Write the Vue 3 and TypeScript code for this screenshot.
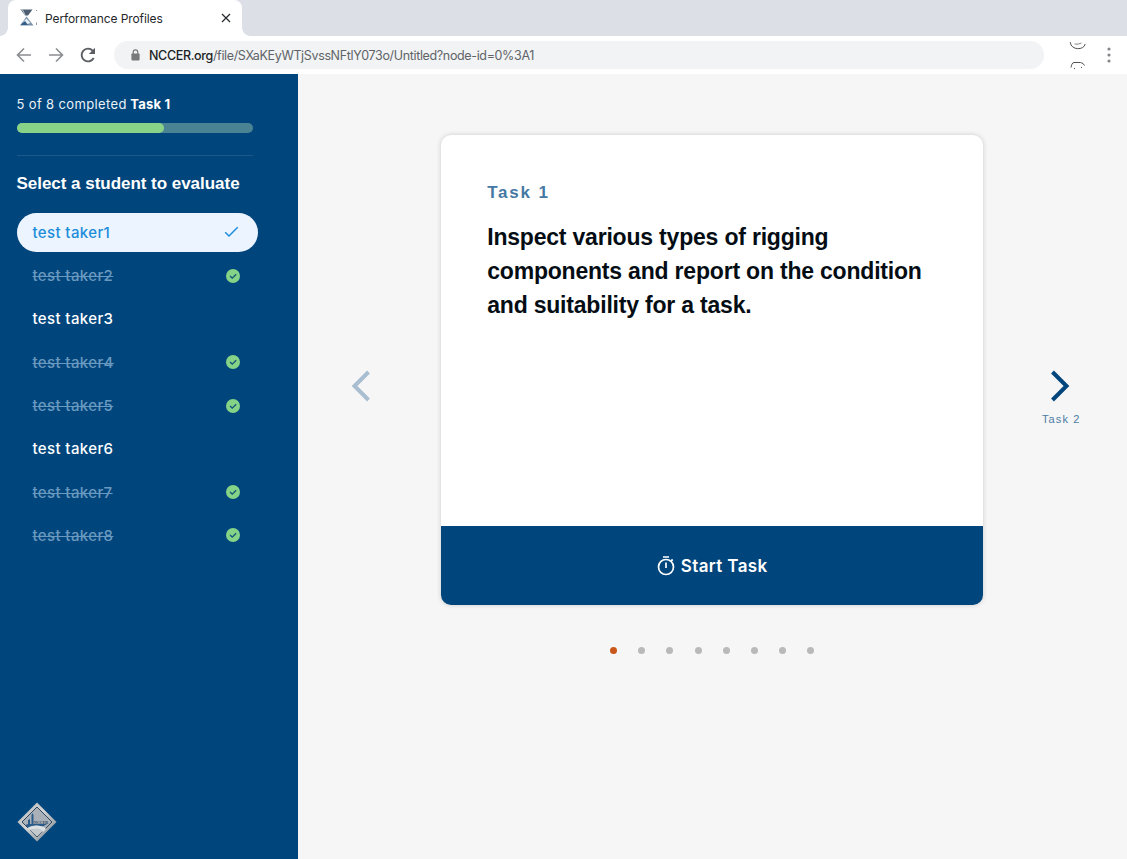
<script setup lang="ts">
interface Student {
  name: string
  status: 'active' | 'done' | 'pending'
}

const students: Student[] = [
  { name: 'test taker1', status: 'active' },
  { name: 'test taker2', status: 'done' },
  { name: 'test taker3', status: 'pending' },
  { name: 'test taker4', status: 'done' },
  { name: 'test taker5', status: 'done' },
  { name: 'test taker6', status: 'pending' },
  { name: 'test taker7', status: 'done' },
  { name: 'test taker8', status: 'done' },
]

const completed = students.filter((s) => s.status === 'done').length
const progress = `${(completed / students.length) * 100}%`
const activeSlide = 1
</script>

<template>
  <div class="window">
    <header class="tabs">
      <div class="tab">
        <svg class="favicon" width="20" height="18" viewBox="0 0 20 18">
          <path d="M0.5 0.5H12.5L8 6.5H5.2Z" fill="#4d5f70" />
          <path d="M0.5 0.5L3 1.5L5.2 6.5" stroke="#b8c9d6" fill="none" />
          <path d="M6.5 7.5L13.5 16.5H0Z" fill="#7790a5" />
          <path d="M6.5 9.5L10.5 14L6 15.5L3 13Z" fill="#e4edf3" />
          <path d="M0.5 16L5 12L8 16Z" fill="#355f8b" />
          <path d="M16.5 13.5V16M16.5 1V2" stroke="#8d98a3" />
        </svg>
        <span class="tab-title">Performance Profiles</span>
        <svg class="close" width="10" height="10" viewBox="0 0 10 10">
          <path d="M1 1L9 9M9 1L1 9" stroke="#25282b" stroke-width="1.2" fill="none" />
        </svg>
      </div>
    </header>

    <div class="toolbar">
      <svg width="16" height="16" viewBox="0 0 16 16">
        <path d="M15 8H2M8 1.5L1.5 8L8 14.5" fill="none" stroke="#8a8d91" stroke-width="1.6" />
      </svg>
      <svg width="16" height="16" viewBox="0 0 16 16">
        <path d="M1 8H14M8 1.5L14.5 8L8 14.5" fill="none" stroke="#8a8d91" stroke-width="1.6" />
      </svg>
      <svg width="16" height="16" viewBox="0 0 16 16">
        <path d="M13.7 11A6.4 6.4 0 1 1 12.7 3.6L14 5" fill="none" stroke="#5b5e62" stroke-width="1.9" />
        <path d="M15 0.8V7H8.8Z" fill="#5b5e62" />
      </svg>
      <div class="address">
        <svg width="9" height="12" viewBox="0 0 9 12">
          <path d="M2.2 5V3.2a2.3 2.3 0 0 1 4.6 0V5" fill="none" stroke="#77797c" stroke-width="1.2" />
          <rect x="0.4" y="4.4" width="8.2" height="7" rx="0.8" fill="#77797c" />
        </svg>
        <span class="url"><span class="host">NCCER.org</span><span class="path">/file/SXaKEyWTjSvssNFtlY073o/Untitled?node-id=0%3A1</span></span>
      </div>
      <svg class="avatar" width="18" height="28" viewBox="0 0 18 28">
        <path d="M1.2 1.2C2 9.5 15 9.5 16.2 3" fill="none" stroke="#505255" />
        <path d="M5.5 3Q9 3.8 12.5 2" fill="none" stroke="#85878a" />
        <path d="M2 26.5C2.5 24.5 3 21.5 5 21.5H11.5Q14.5 22 15.5 24.5" fill="none" stroke="#505255" />
        <path d="M5 27.5H6M12 26.5H13" stroke="#505255" />
      </svg>
      <svg class="menu" width="4" height="16" viewBox="0 0 4 16" fill="#85878a">
        <circle cx="2" cy="2" r="1.6" />
        <circle cx="2" cy="8" r="1.6" />
        <circle cx="2" cy="14" r="1.6" />
      </svg>
    </div>

    <div class="body">
      <aside class="sidebar">
        <p class="summary"><span class="count">{{ completed }} of {{ students.length }} completed</span><b>Task 1</b></p>
        <div class="progress"><div class="progress-fill" :style="{ width: progress }"></div></div>
        <div class="divider"></div>
        <h2>Select a student to evaluate</h2>
        <ul class="students">
          <li v-for="student in students" :key="student.name" :class="student.status">
            <span class="name">{{ student.name }}</span>
            <svg v-if="student.status === 'active'" class="tick" width="15" height="12" viewBox="0 0 15 12">
              <path d="M1.2 6.2L5 10L13.7 1.3" fill="none" stroke="#1c8ddb" stroke-width="1.5" />
            </svg>
            <svg v-else-if="student.status === 'done'" class="badge" width="14" height="14" viewBox="0 0 14 14">
              <circle cx="7" cy="7" r="7" fill="#84d387" />
              <path d="M4 7.1L6.2 9.1L10.2 5.2" fill="none" stroke="#14537a" stroke-width="1.3" />
            </svg>
          </li>
        </ul>
        <svg class="logo" width="40" height="40" viewBox="0 0 40 40">
          <defs>
            <linearGradient id="steel" x1="0" y1="0" x2="1" y2="1">
              <stop offset="0" stop-color="#aeb2b6" />
              <stop offset="0.45" stop-color="#d2d4d5" />
              <stop offset="1" stop-color="#777f88" />
            </linearGradient>
          </defs>
          <path d="M20 0.5L39.5 20L20 39.5L0.5 20Z" fill="url(#steel)" />
          <path d="M20 5L35 20L20 35L5 20Z" fill="#a9b0b7" stroke="#30475b" stroke-width="1" />
          <path d="M11 22V18L13 17V22H14.5V13L15.5 11L16.5 13V22H30L26 24.5Q16 22 11 25.5L8.5 23Z" fill="#2a5c8b" />
          <path d="M10.5 26Q18 21.5 27 25L29 27L26 30Q22 25 12 28Z" fill="#dce1e4" />
          <path d="M13 28Q22 24.5 26 29L20 34.5Z" fill="#c3c9cd" />
          <text x="17" y="22" class="logo-text">NCCER</text>
        </svg>
      </aside>

      <main>
        <div class="carousel">
          <button class="arrow previous" aria-label="Previous task">
            <svg width="20" height="32" viewBox="0 0 20 32">
              <path d="M17.5 2L3.5 16L17.5 30" fill="none" stroke="#a9bfd1" stroke-width="4" />
            </svg>
          </button>
          <article class="card">
            <div class="card-body">
              <h3>Task 1</h3>
              <p>Inspect various types of rigging components and report on the condition and suitability for a task.</p>
            </div>
            <button class="start">
              <svg width="18" height="20" viewBox="0 0 18 20" fill="none" stroke="#fff">
                <circle cx="9" cy="11" r="7.5" stroke-width="1.7" />
                <path d="M6 1H12M9 6.5V12M14 5L15.7 3.5" stroke-width="1.7" />
              </svg>
              <span>Start Task</span>
            </button>
          </article>
          <button class="arrow next" aria-label="Next task">
            <svg width="20" height="32" viewBox="0 0 20 32">
              <path d="M2.5 2L16.5 16L2.5 30" fill="none" stroke="#00457c" stroke-width="4" />
            </svg>
            <span>Task 2</span>
          </button>
        </div>
        <div class="dots">
          <i v-for="n in 8" :key="n" :class="{ current: n === activeSlide }"></i>
        </div>
      </main>
    </div>
  </div>
</template>

<style>
body {
  margin: 0;
  overflow: hidden;
}
</style>

<style scoped>
* {
  box-sizing: border-box;
}
svg {
  display: block;
  flex: none;
}
p, h2, h3, ul {
  margin: 0;
  padding: 0;
}
button {
  border: 0;
  padding: 0;
  background: none;
}
.window {
  width: 1127px;
  height: 859px;
  display: flex;
  flex-direction: column;
  background: #fff;
  font-family: Inter, sans-serif;
  white-space: nowrap;
}
.tabs {
  height: 36px;
  flex: none;
  padding-left: 8px;
  background: #dcdfe6;
}
.tab {
  position: relative;
  width: 234px;
  height: 36px;
  padding: 0 11px 0 12px;
  display: flex;
  align-items: center;
  border-radius: 8px 8px 0 0;
  background: #fff;
}
.tab::before,
.tab::after {
  content: '';
  position: absolute;
  bottom: 0;
  width: 8px;
  height: 8px;
}
.tab::before {
  left: -8px;
  background: radial-gradient(circle at 0 0, transparent 7.5px, #fff 8px);
}
.tab::after {
  right: -8px;
  background: radial-gradient(circle at 100% 0, transparent 7.5px, #fff 8px);
}
.tab-title {
  margin-left: 5px;
  font-size: 12px;
  color: #25282b;
  letter-spacing: -0.1px;
}
.close {
  margin-left: auto;
}
.toolbar {
  height: 38px;
  flex: none;
  padding: 0 16px;
  display: flex;
  align-items: center;
  gap: 16px;
}
.address {
  width: 930px;
  height: 28px;
  margin-left: 2px;
  padding-left: 17px;
  display: flex;
  align-items: center;
  gap: 9px;
  border-radius: 14px;
  background: #f1f3f4;
}
.url {
  font-size: 12.5px;
  letter-spacing: -0.35px;
}
.host {
  color: #202326;
  font-weight: 500;
}
.path {
  color: #5f6368;
}
.avatar {
  margin-left: 9px;
}
.menu {
  margin-left: 4px;
}
.body {
  flex: 1;
  display: flex;
}
.sidebar {
  width: 298px;
  padding: 20px 0 17px 16.5px;
  display: flex;
  flex-direction: column;
  background: #00457c;
  color: #fff;
}
.summary {
  height: 20px;
  line-height: 20px;
  font-size: 13px;
  color: #eaf2f8;
}
.count {
  letter-spacing: 0.36px;
}
.summary b {
  margin-left: 3.5px;
  letter-spacing: 0.2px;
  color: #fff;
}
.progress {
  width: 236px;
  height: 10px;
  margin-top: 9px;
  border-radius: 5px;
  background: #4a8494;
}
.progress-fill {
  height: 100%;
  border-radius: 5px;
  background: #88d387;
}
.divider {
  width: 236px;
  height: 1px;
  margin-top: 22px;
  background: #1f5888;
}
h2 {
  height: 24px;
  margin-top: 16px;
  font: bold 17px/24px 'Liberation Sans', Arial, sans-serif;
  letter-spacing: -0.03px;
}
.students {
  margin-top: 16.7px;
  display: flex;
  flex-direction: column;
  gap: 4px;
  list-style: none;
}
.students li {
  width: 241px;
  height: 39.3px;
  padding: 0 18px 0 16px;
  display: flex;
  align-items: center;
  justify-content: space-between;
  border-radius: 20px;
  font-size: 15px;
  font-weight: 500;
  letter-spacing: 0.38px;
}
.students .active {
  padding-right: 19px;
  background: #ebf4ff;
  color: #1c8ddb;
}
.done .name {
  color: #6999bf;
  text-decoration: line-through;
  text-decoration-thickness: 1px;
}
.logo {
  margin-top: auto;
}
.logo-text {
  font: bold 4px 'Liberation Serif', serif;
  fill: #24435e;
}
main {
  flex: 1;
  padding-top: 61px;
  background: #f6f6f6;
}
.carousel {
  display: flex;
  padding-left: 52.5px;
}
.arrow {
  display: flex;
  flex-direction: column;
  align-items: center;
  padding-top: 235px;
}
.next {
  width: 42px;
  margin-left: 57px;
}
.next svg {
  margin-left: -3px;
}
.next span {
  margin-top: 10px;
  font: 11px/14px 'Liberation Sans', Arial, sans-serif;
  letter-spacing: 1.1px;
  color: #4b7ca4;
}
.card {
  width: 542px;
  height: 470px;
  margin-left: 70.7px;
  display: flex;
  flex-direction: column;
  border-radius: 10px;
  background: #fff;
  box-shadow: 0 0 5px rgba(0, 0, 0, 0.18);
}
.card-body {
  flex: 1;
  padding: 46px 46px 0;
  font-family: 'Liberation Sans', Arial, sans-serif;
}
h3 {
  font-size: 17px;
  line-height: 24px;
  letter-spacing: 1.8px;
  color: #4579a3;
}
.card-body p {
  margin-top: 15px;
  font-size: 23px;
  font-weight: bold;
  line-height: 34px;
  letter-spacing: -0.2px;
  color: #050d14;
  white-space: normal;
}
.start {
  height: 79px;
  display: flex;
  align-items: center;
  justify-content: center;
  gap: 6px;
  border-radius: 0 0 10px 10px;
  background: #00457c;
  color: #fff;
  font: 600 17px Inter, sans-serif;
  letter-spacing: 0.4px;
}
.dots {
  margin: 42px 0 0 312px;
  display: flex;
  gap: 21.2px;
}
.dots i {
  width: 7px;
  height: 7px;
  border-radius: 50%;
  background: #b9b9b9;
}
.dots .current {
  background: #c9571b;
}
</style>
